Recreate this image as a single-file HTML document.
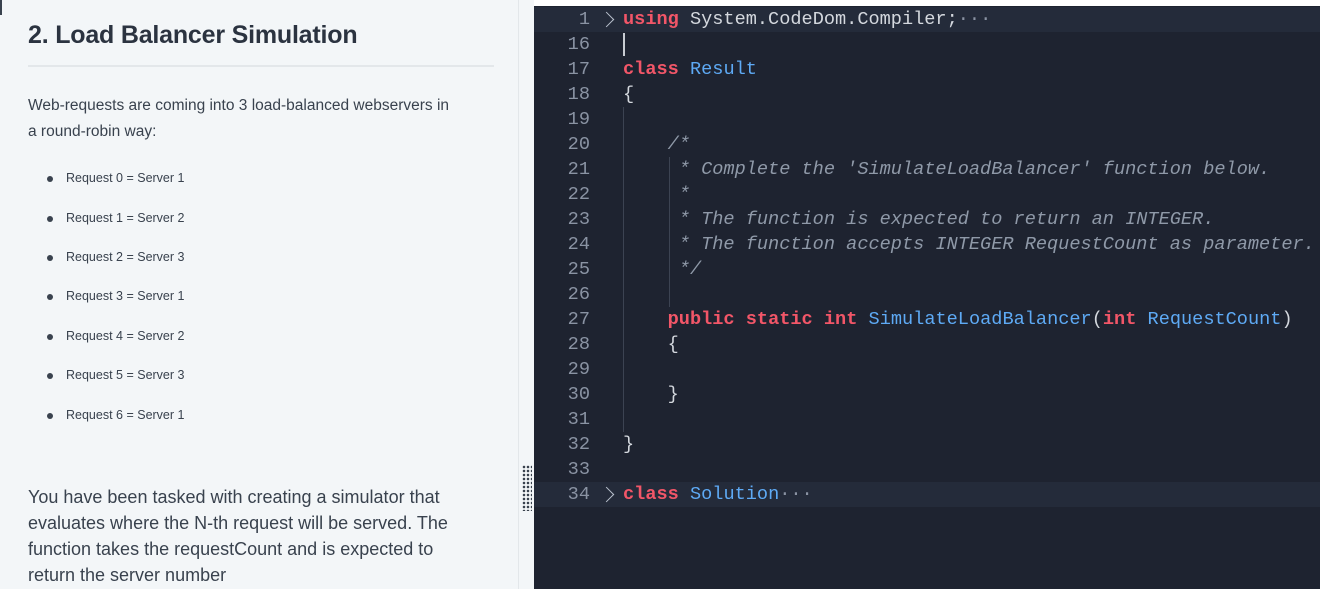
<!DOCTYPE html>
<html><head><style>
*{margin:0;padding:0;box-sizing:border-box}
body{width:1320px;height:589px;overflow:hidden;background:#f3f6f8;position:relative;font-family:"Liberation Sans",sans-serif}
#left{position:absolute;left:0;top:0;width:519px;height:589px;background:#f3f6f8;border-right:1px solid #e3e7ea;color:#39424e}
#left .strip{position:absolute;left:0;top:0;width:2px;height:15px;background:#39424e}
h2{position:absolute;left:28px;top:21px;font-size:25px;font-weight:bold;color:#2b3340;letter-spacing:-0.2px}
.hr{position:absolute;left:28px;top:65px;width:466px;height:2px;background:#e3e7ea}
.p1{position:absolute;left:28px;top:93px;width:422px;font-size:15.5px;line-height:26px;color:#39424e}
.li{position:absolute;left:66px;font-size:12.5px;color:#39424e}
.li:before{content:"";position:absolute;left:-19px;top:5px;width:6px;height:6px;border-radius:50%;background:#39424e}
.p2{position:absolute;left:28px;top:484px;width:455px;font-size:18px;line-height:26px;color:#39424e}
#gap{position:absolute;left:520px;top:0;width:14px;height:589px;background:#f3f6f8}
.grip{position:absolute;left:522px;top:465px;width:10px;height:46px;background-image:radial-gradient(circle,#39424e 1.2px,transparent 1.4px);background-size:4px 4px}
#ed{position:absolute;left:534px;top:6px;width:786px;height:583px;background:#1e2330;font-family:"Liberation Mono",monospace;font-size:18.6px}
#top{position:absolute;left:534px;top:0;width:786px;height:6px;background:#fff}
.row{position:absolute;left:0;width:786px;height:25px;line-height:25px;white-space:pre}
.hl{background:#242b3a}
.n{position:absolute;right:730px;color:#8a93a3;text-align:right}
.c{position:absolute;left:89px;color:#d4d8de}
.k{color:#f25668;font-weight:bold}
.b{color:#5eaaf5}
.cm{color:#8f99a8;font-style:italic}
.arr{position:absolute;left:67px;top:7px;width:11px;height:11px;border-right:1.5px solid #b8c0cc;border-top:1.5px solid #b8c0cc;transform:rotate(45deg)}
.guide{position:absolute;width:1px;background:#3c4352}
</style></head><body>
<div id="left">
<div class="strip"></div>
<h2>2. Load Balancer Simulation</h2>
<div class="hr"></div>
<div class="p1">Web-requests are coming into 3 load-balanced webservers in a round-robin way:</div>
<div class="li" style="top:171px">Request 0 = Server 1</div>
<div class="li" style="top:211px">Request 1 = Server 2</div>
<div class="li" style="top:250px">Request 2 = Server 3</div>
<div class="li" style="top:289px">Request 3 = Server 1</div>
<div class="li" style="top:329px">Request 4 = Server 2</div>
<div class="li" style="top:368px">Request 5 = Server 3</div>
<div class="li" style="top:408px">Request 6 = Server 1</div>
<div class="p2">You have been tasked with creating a simulator that evaluates where the N-th request will be served. The function takes the requestCount and is expected to return the server number</div>
</div>
<div id="gap"></div>
<div class="grip"></div>
<div id="top"></div>
<div id="ed">
<div class="guide" style="left:89px;top:101px;height:325px"></div>
<div class="guide" style="left:135px;top:151px;height:150px"></div>
<div class="row hl" style="top:1px"><span class="n">1</span><span class="arr"></span><span class="c"><span class="k">using</span> System.CodeDom.Compiler;<span style="color:#8a93a3">···</span></span></div>
<div class="row" style="top:26px"><span class="n">16</span><span style="position:absolute;left:89px;top:1px;width:2px;height:23px;background:#c8ccd2"></span></div>
<div class="row" style="top:51px"><span class="n">17</span><span class="c"><span class="k">class</span> <span class="b">Result</span></span></div>
<div class="row" style="top:76px"><span class="n">18</span><span class="c">{</span></div>
<div class="row" style="top:101px"><span class="n">19</span></div>
<div class="row" style="top:126px"><span class="n">20</span><span class="c cm">    /*</span></div>
<div class="row" style="top:151px"><span class="n">21</span><span class="c cm">     * Complete the 'SimulateLoadBalancer' function below.</span></div>
<div class="row" style="top:176px"><span class="n">22</span><span class="c cm">     *</span></div>
<div class="row" style="top:201px"><span class="n">23</span><span class="c cm">     * The function is expected to return an INTEGER.</span></div>
<div class="row" style="top:226px"><span class="n">24</span><span class="c cm">     * The function accepts INTEGER RequestCount as parameter.</span></div>
<div class="row" style="top:251px"><span class="n">25</span><span class="c cm">     */</span></div>
<div class="row" style="top:276px"><span class="n">26</span></div>
<div class="row" style="top:301px"><span class="n">27</span><span class="c">    <span class="k">public</span> <span class="k">static</span> <span class="k">int</span> <span class="b">SimulateLoadBalancer</span>(<span class="k">int</span> <span class="b">RequestCount</span>)</span></div>
<div class="row" style="top:326px"><span class="n">28</span><span class="c">    {</span></div>
<div class="row" style="top:351px"><span class="n">29</span></div>
<div class="row" style="top:376px"><span class="n">30</span><span class="c">    }</span></div>
<div class="row" style="top:401px"><span class="n">31</span></div>
<div class="row" style="top:426px"><span class="n">32</span><span class="c">}</span></div>
<div class="row" style="top:451px"><span class="n">33</span></div>
<div class="row hl" style="top:476px"><span class="n">34</span><span class="arr"></span><span class="c"><span class="k">class</span> <span class="b">Solution</span><span style="color:#8a93a3">···</span></span></div>
</div>
</body></html>
